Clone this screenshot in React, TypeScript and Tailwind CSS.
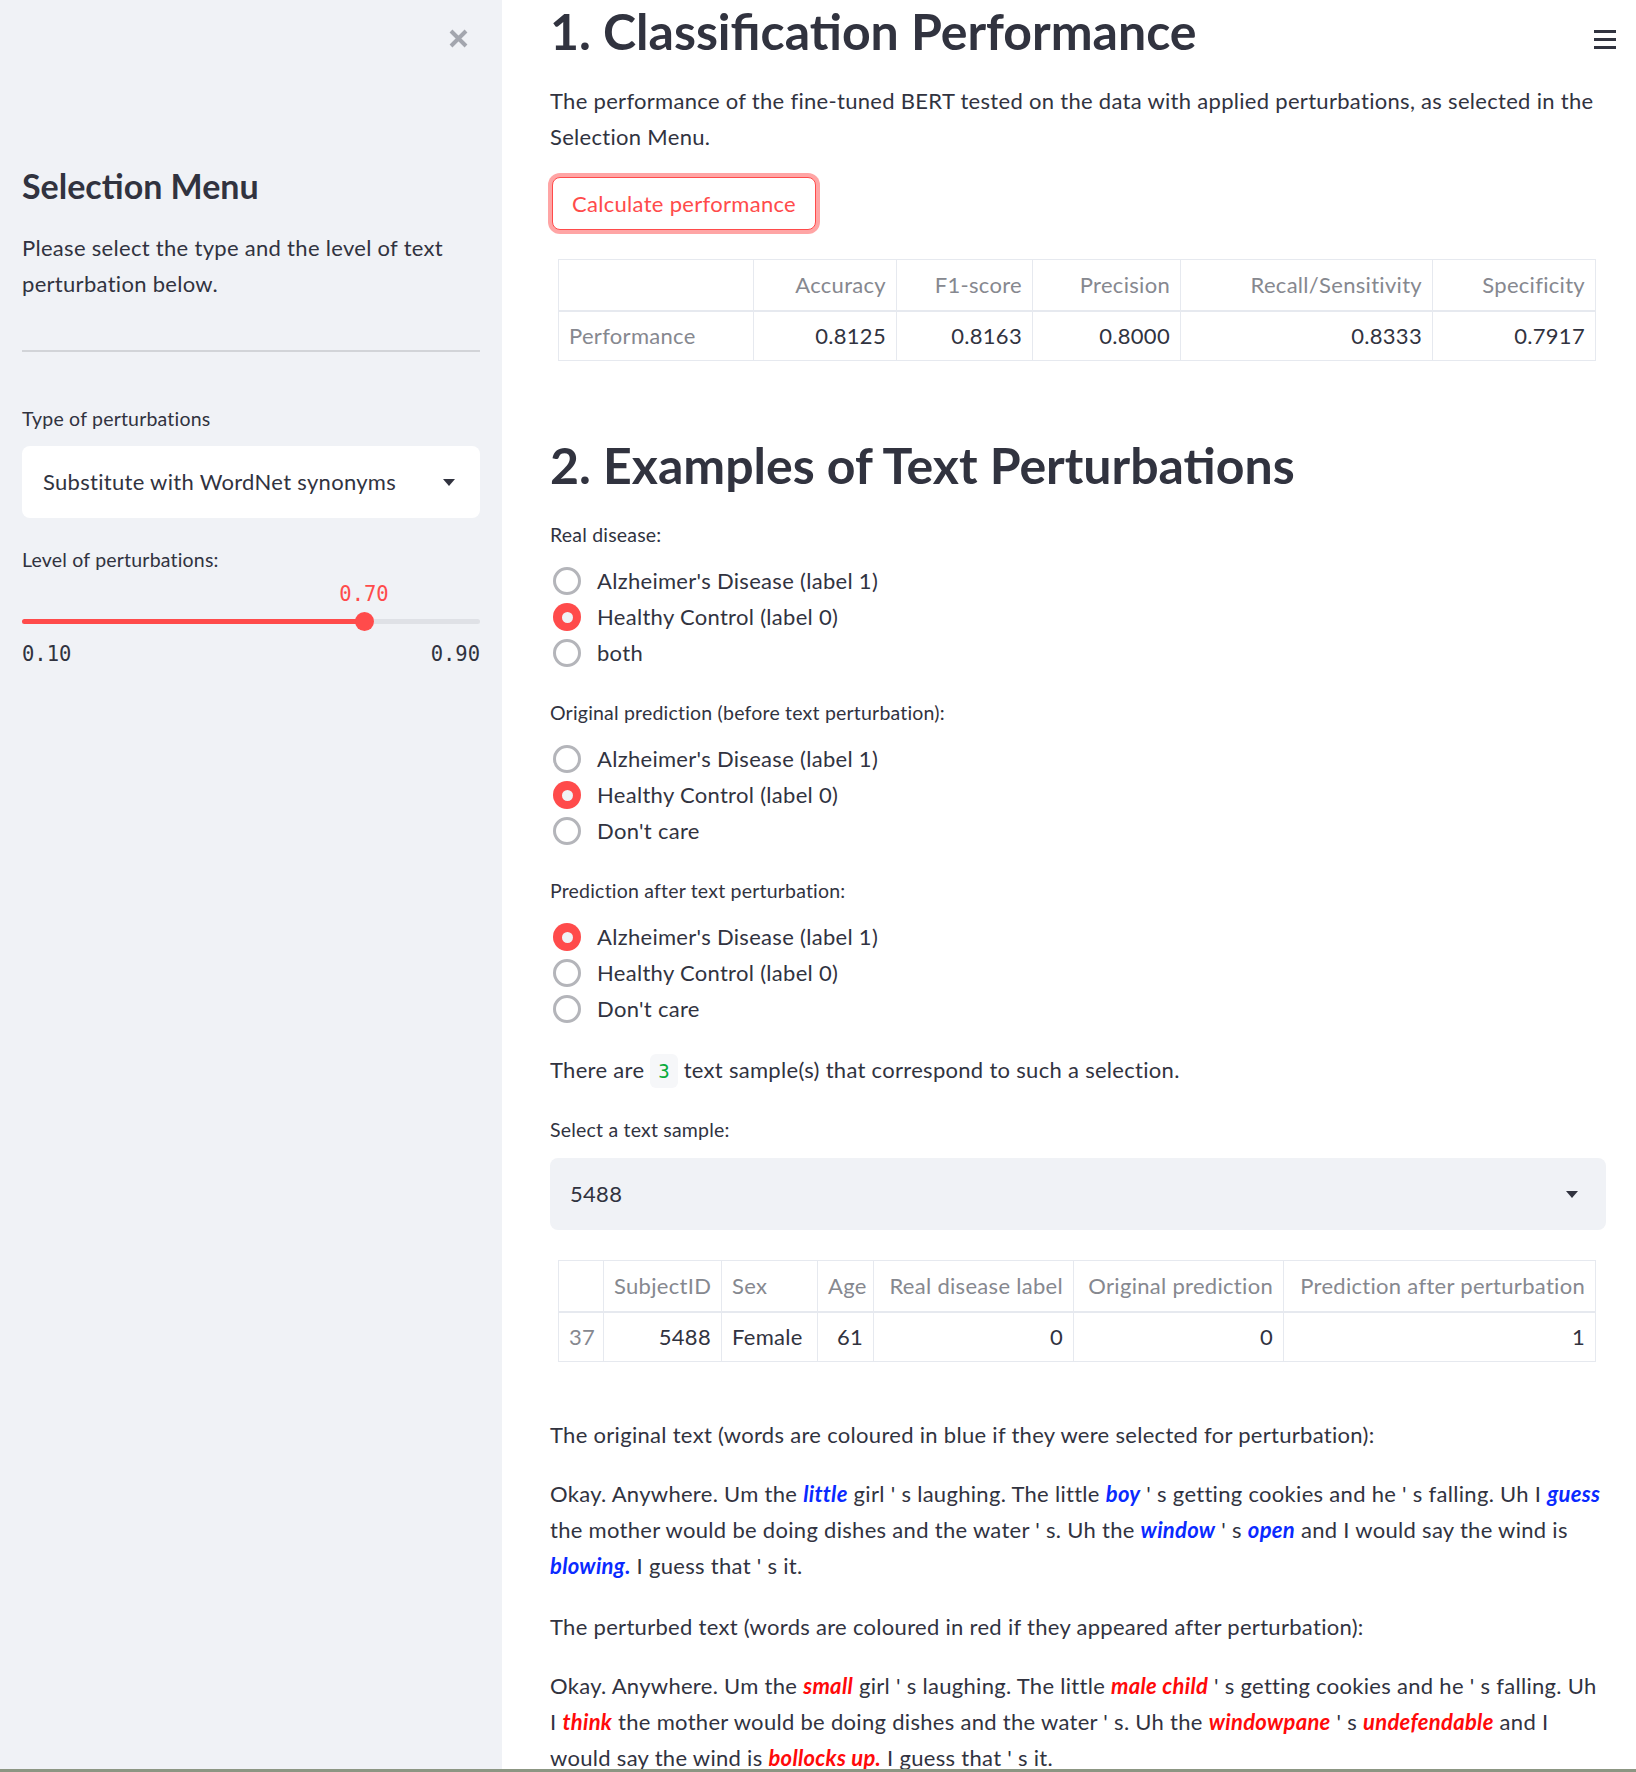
import React from "react";

const SANS = "font-['Lato',sans-serif]";
const MONO = "font-['DejaVu_Sans_Mono',monospace] tracking-normal";
const BODY = "text-[22px] leading-[36px] tracking-[0.3px]";
const LABEL = "text-[19.5px] leading-[28px] tracking-[0.2px]";

function Caret() {
  return (
    <svg width="12" height="7" viewBox="0 0 12 7">
      <path d="M0 0h12L6 7z" fill="#31333f" />
    </svg>
  );
}

function Radio({ label, checked }: { label: string; checked?: boolean }) {
  return (
    <div className="flex h-[36px] items-center">
      {checked ? (
        <span className="ml-[3px] flex h-[28px] w-[28px] items-center justify-center rounded-full bg-[#ff4b4b]">
          <span className="h-[11px] w-[11px] rounded-full bg-[#f0f2f6]" />
        </span>
      ) : (
        <span className="ml-[3px] h-[28px] w-[28px] rounded-full border-[3px] border-[#b4b5ba] bg-white" />
      )}
      <span className={`ml-[16px] ${BODY}`}>{label}</span>
    </div>
  );
}

function RadioGroup({
  label,
  options,
  selected,
  className,
}: {
  label: string;
  options: string[];
  selected: number;
  className?: string;
}) {
  return (
    <div className={className}>
      <div className={LABEL}>{label}</div>
      <div className="mt-[14px]">
        {options.map((o, i) => (
          <Radio key={o} label={o} checked={i === selected} />
        ))}
      </div>
    </div>
  );
}

const th = "border border-[#e6e9ef] px-[10px] font-normal text-[#86888f]";
const td = "border border-[#e6e9ef] px-[10px]";

function PerfTable() {
  const heads = ["Accuracy", "F1-score", "Precision", "Recall/Sensitivity", "Specificity"];
  const vals = ["0.8125", "0.8163", "0.8000", "0.8333", "0.7917"];
  const widths = ["w-[143px]", "w-[136px]", "w-[148px]", "w-[252px]", "w-[163px]"];
  return (
    <table className="ml-[8px] mt-[29px] w-[1037px] table-fixed border-collapse text-[22px] tracking-[0.3px]">
      <colgroup>
        <col className="w-[195px]" />
        {widths.map((w) => (
          <col key={w} className={w} />
        ))}
      </colgroup>
      <thead>
        <tr className="h-[51px]">
          <th className={`${th} border-b-2`} />
          {heads.map((h) => (
            <th key={h} className={`${th} border-b-2 text-right`}>
              {h}
            </th>
          ))}
        </tr>
      </thead>
      <tbody>
        <tr className="h-[50px]">
          <td className={`${td} text-[#86888f]`}>Performance</td>
          {vals.map((v) => (
            <td key={v} className={`${td} text-right`}>
              {v}
            </td>
          ))}
        </tr>
      </tbody>
    </table>
  );
}

function SampleTable() {
  const cols = [
    { h: "", v: "37", w: "w-[45px]", align: "text-left", gray: true },
    { h: "SubjectID", v: "5488", w: "w-[118px]", align: "text-right" },
    { h: "Sex", v: "Female", w: "w-[96px]", align: "text-left" },
    { h: "Age", v: "61", w: "w-[56px]", align: "text-right" },
    { h: "Real disease label", v: "0", w: "w-[200px]", align: "text-right" },
    { h: "Original prediction", v: "0", w: "w-[210px]", align: "text-right" },
    { h: "Prediction after perturbation", v: "1", w: "w-[312px]", align: "text-right" },
  ];
  return (
    <table className="ml-[8px] mt-[30px] w-[1037px] table-fixed border-collapse text-[22px] tracking-[0.3px]">
      <colgroup>
        {cols.map((c) => (
          <col key={c.w + c.h} className={c.w} />
        ))}
      </colgroup>
      <thead>
        <tr className="h-[51px]">
          {cols.map((c) => (
            <th key={c.h + c.w} className={`${th} border-b-2 whitespace-nowrap ${c.align}`}>
              {c.h}
            </th>
          ))}
        </tr>
      </thead>
      <tbody>
        <tr className="h-[50px]">
          {cols.map((c) => (
            <td key={c.h + c.w} className={`${td} ${c.align} ${c.gray ? "text-[#86888f]" : ""}`}>
              {c.v}
            </td>
          ))}
        </tr>
      </tbody>
    </table>
  );
}

function Blue({ children }: { children: React.ReactNode }) {
  return <em className="font-bold text-[#0a2aff]">{children}</em>;
}

function Red({ children }: { children: React.ReactNode }) {
  return <em className="font-bold text-[#ff0a0a]">{children}</em>;
}

function Sidebar() {
  return (
    <aside className="relative w-[502px] shrink-0 bg-[#f0f2f6] px-[22px]">
      <svg className="absolute left-[448px] top-[28px]" width="21" height="21" viewBox="0 0 21 21">
        <path d="M3 3l15 15M18 3L3 18" stroke="#a3a6ae" strokeWidth="4" />
      </svg>
      <h2 className="mt-[164px] text-[34px] font-bold leading-[44px] tracking-normal">Selection Menu</h2>
      <p className={`mt-[22px] ${BODY}`}>Please select the type and the level of text perturbation below.</p>
      <div className="mt-[48px] h-[2px] bg-[#d2d4d8]" />
      <div className={`mt-[53px] ${LABEL}`}>Type of perturbations</div>
      <div className="mt-[13px] flex h-[72px] items-center justify-between rounded-lg bg-white pl-[21px] pr-[25px]">
        <span className={BODY}>Substitute with WordNet synonyms</span>
        <Caret />
      </div>
      <div className={`mt-[28px] ${LABEL}`}>Level of perturbations:</div>
      <div className="relative mt-[4px] h-[64px]">
        <div className={`absolute left-[316px] top-[4px] w-[52px] text-center text-[20.5px] leading-[24px] text-[#ff4b4b] ${MONO}`}>
          0.70
        </div>
        <div className="absolute left-0 right-0 top-[41px] h-[5px] rounded-full bg-[#dfe1e6]">
          <div className="h-full w-[342px] rounded-full bg-[#ff4b4b]" />
        </div>
        <div className="absolute left-[333px] top-[34px] h-[19px] w-[19px] rounded-full bg-[#ff4b4b]" />
      </div>
      <div className={`flex justify-between text-[20.5px] leading-[24px] ${MONO}`}>
        <span>0.10</span>
        <span>0.90</span>
      </div>
    </aside>
  );
}

function Main() {
  return (
    <main className="relative flex-1 overflow-hidden pl-[48px] pr-[30px]">
      <div className="absolute right-[20px] top-[30px] flex w-[22px] flex-col gap-[5.5px]">
        <span className="h-[2.5px] bg-[#31333f]" />
        <span className="h-[2.5px] bg-[#31333f]" />
        <span className="h-[2.5px] bg-[#31333f]" />
      </div>
      <h1 className="mt-[1px] text-[50px] font-bold leading-[60px] tracking-normal">1. Classification Performance</h1>
      <p className={`mt-[22px] ${BODY}`}>
        The performance of the fine-tuned BERT tested on the data with applied perturbations, as selected in the
        Selection Menu.
      </p>
      <button
        className={`ml-[2px] mt-[22px] h-[53px] w-[264px] rounded-lg border border-[#ff4b4b] bg-white text-[#ff4b4b] shadow-[0_0_0_4px_rgba(255,75,75,0.5)] ${BODY}`}
      >
        Calculate performance
      </button>
      <PerfTable />

      <h1 className="mt-[74px] text-[50px] font-bold leading-[60px] tracking-normal">
        2. Examples of Text Perturbations
      </h1>
      <RadioGroup
        className="mt-[26px]"
        label="Real disease:"
        options={["Alzheimer's Disease (label 1)", "Healthy Control (label 0)", "both"]}
        selected={1}
      />
      <RadioGroup
        className="mt-[28px]"
        label="Original prediction (before text perturbation):"
        options={["Alzheimer's Disease (label 1)", "Healthy Control (label 0)", "Don't care"]}
        selected={1}
      />
      <RadioGroup
        className="mt-[28px]"
        label="Prediction after text perturbation:"
        options={["Alzheimer's Disease (label 1)", "Healthy Control (label 0)", "Don't care"]}
        selected={0}
      />
      <p className={`mt-[25px] ${BODY}`}>
        There are{" "}
        <code className={`inline-block rounded-md bg-[#f6f7f9] px-[8px] text-[19px] leading-[34px] text-[#09ab3b] ${MONO}`}>
          3
        </code>{" "}
        text sample(s) that correspond to such a selection.
      </p>
      <div className={`mt-[28px] ${LABEL}`}>Select a text sample:</div>
      <div className="mt-[14px] flex h-[72px] items-center justify-between rounded-lg bg-[#f0f2f6] pl-[20px] pr-[28px]">
        <span className={BODY}>5488</span>
        <Caret />
      </div>
      <SampleTable />

      <p className={`mt-[55px] ${BODY}`}>
        The original text (words are coloured in blue if they were selected for perturbation):
      </p>
      <p className={`mr-[-24px] mt-[23px] ${BODY}`}>
        Okay. Anywhere. Um the <Blue>little</Blue> girl ' s laughing. The little <Blue>boy</Blue> ' s getting
        cookies and he ' s falling. Uh I <Blue>guess</Blue>
        <br />
        the mother would be doing dishes and the water ' s. Uh the <Blue>window</Blue> ' s <Blue>open</Blue> and I
        would say the wind is
        <br />
        <Blue>blowing.</Blue> I guess that ' s it.
      </p>
      <p className={`mt-[25px] ${BODY}`}>
        The perturbed text (words are coloured in red if they appeared after perturbation):
      </p>
      <p className={`mr-[-24px] mt-[23px] ${BODY}`}>
        Okay. Anywhere. Um the <Red>small</Red> girl ' s laughing. The little <Red>male child</Red> ' s getting
        cookies and he ' s falling. Uh
        <br />I <Red>think</Red> the mother would be doing dishes and the water ' s. Uh the <Red>windowpane</Red> '
        s <Red>undefendable</Red> and I
        <br />
        would say the wind is <Red>bollocks up.</Red> I guess that ' s it.
      </p>
    </main>
  );
}

export default function App() {
  return (
    <div className={`flex h-[1772px] w-[1636px] flex-col overflow-hidden bg-white text-[#31333f] ${SANS}`}>
      <div className="flex h-[1769px] overflow-hidden">
        <Sidebar />
        <Main />
      </div>
      <div className="h-[3px] bg-[#8c9683]" />
    </div>
  );
}
